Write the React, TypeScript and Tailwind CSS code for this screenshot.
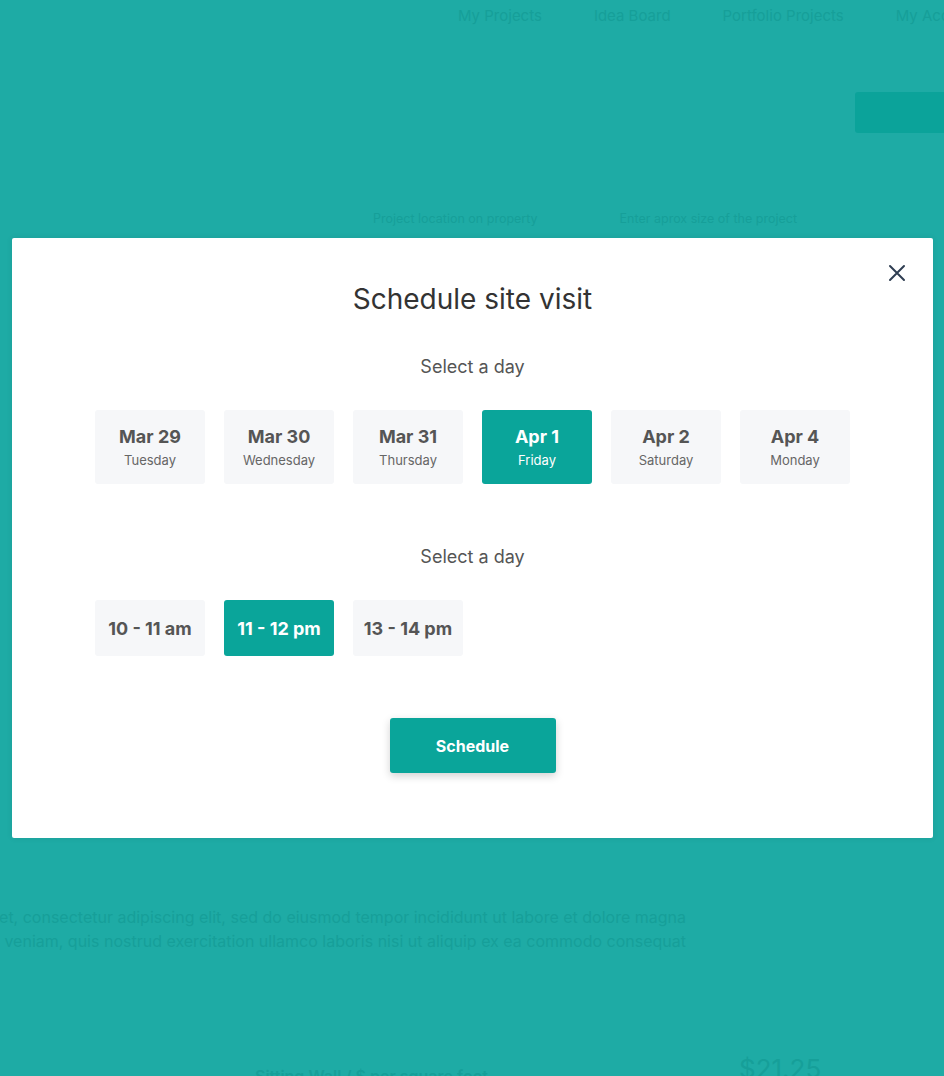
import { useState } from 'react';

const days = [
  { date: 'Mar 29', day: 'Tuesday' },
  { date: 'Mar 30', day: 'Wednesday' },
  { date: 'Mar 31', day: 'Thursday' },
  { date: 'Apr 1', day: 'Friday' },
  { date: 'Apr 2', day: 'Saturday' },
  { date: 'Apr 4', day: 'Monday' },
];

const slots = ['10 - 11 am', '11 - 12 pm', '13 - 14 pm'];

export default function App() {
  const [day, setDay] = useState(3);
  const [slot, setSlot] = useState(1);

  return (
    <div className="relative w-[944px] h-[1076px] overflow-hidden bg-[#1eaba5] font-['Inter',sans-serif] text-[#169f99]">
      {/* page behind the overlay */}
      <nav className="flex gap-[52px] pt-[5px] pl-[458px] text-[15px] whitespace-nowrap">
        <span>My Projects</span>
        <span>Idea Board</span>
        <span>Portfolio Projects</span>
        <span>My Account</span>
      </nav>
      <div className="flex justify-end mt-[64px]">
        <div className="w-[89px] h-[41px] bg-[#0ba39a] rounded-l-[3px]" />
      </div>
      <div className="flex gap-[82px] pl-[373px] mt-[77px] text-[12.5px]">
        <span>Project location on property</span>
        <span>Enter aprox size of the project</span>
      </div>
      <div className="mt-[677px] w-[686px] text-[16px] leading-[24px] whitespace-nowrap overflow-hidden">
        <p className="flex justify-end">
          <span>Lorem ipsum dolor sit amet, consectetur adipiscing elit, sed do eiusmod tempor incididunt ut labore et dolore magna</span>
        </p>
        <p className="flex justify-end">
          <span>aliqua. Ut enim ad minim veniam, quis nostrud exercitation ullamco laboris nisi ut aliquip ex ea commodo consequat</span>
        </p>
      </div>
      <div className="flex items-end mt-[96px] pl-[255px] whitespace-nowrap">
        <span className="text-[16px] font-semibold w-[484px]">Sitting Wall / $ per square foot</span>
        <span className="text-[26px]">$21.25</span>
      </div>

      {/* modal */}
      <div className="absolute left-[12px] top-[238px] w-[921px] h-[600px] bg-white rounded-[2px] shadow-[0_0_6px_rgba(0,0,0,0.08)] text-[#555]">
        <button className="absolute right-[26px] top-[25px] text-[#2f3e52]">
          <svg width="20" height="20" viewBox="0 0 20 20" fill="none" stroke="currentColor" strokeWidth="2" strokeLinecap="round">
            <path d="M3 3l14 14M17 3L3 17" />
          </svg>
        </button>
        <div className="flex flex-col items-center pt-[43px]">
          <h2 className="text-[28px] leading-[36px] text-[#333]">Schedule site visit</h2>
          <p className="mt-[38px] text-[18px] leading-[24px] text-[#555]">Select a day</p>
          <div className="mt-[31px] flex gap-[19px] self-start pl-[83px]">
            {days.map((d, i) => (
              <button
                key={d.date}
                onClick={() => setDay(i)}
                className={
                  'w-[110px] h-[74px] rounded-[3px] flex flex-col items-center justify-center ' +
                  (i === day ? 'bg-[#0aa59a] text-white' : 'bg-[#f6f7f9] text-[#555]')
                }
              >
                <span className="text-[18px] leading-[24px] font-bold">{d.date}</span>
                <span className={'text-[13px] leading-[18px] mt-[2px] ' + (i === day ? 'text-white' : 'text-[#666]')}>{d.day}</span>
              </button>
            ))}
          </div>
          <p className="mt-[61px] text-[18px] leading-[24px] text-[#555]">Select a day</p>
          <div className="mt-[31px] flex gap-[19px] self-start pl-[83px]">
            {slots.map((s, i) => (
              <button
                key={s}
                onClick={() => setSlot(i)}
                className={
                  'w-[110px] h-[56px] rounded-[3px] text-[18px] font-bold ' +
                  (i === slot ? 'bg-[#0aa59a] text-white' : 'bg-[#f6f7f9] text-[#555]')
                }
              >
                {s}
              </button>
            ))}
          </div>
          <button className="mt-[62px] w-[166px] h-[55px] rounded-[3px] bg-[#0aa59a] text-white text-[16px] font-bold shadow-[0_3px_8px_rgba(0,0,0,0.18)]">
            Schedule
          </button>
        </div>
      </div>
    </div>
  );
}
